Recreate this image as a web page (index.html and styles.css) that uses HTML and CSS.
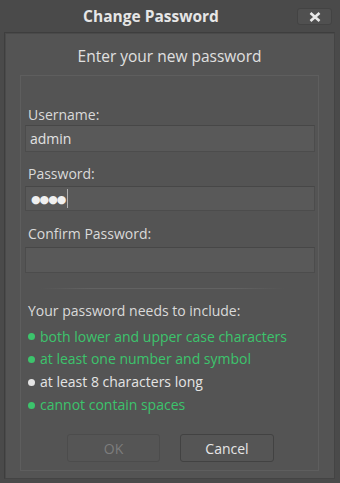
FILE: index.html
```html
<!DOCTYPE html>
<html>
<head>
<meta charset="utf-8">
<link rel="stylesheet" href="styles.css">
</head>
<body>
<div class="window">
  <div class="titlebar">
    <span class="title">Change Password</span>
    <button class="close" aria-label="Close">
      <svg width="12" height="10" viewBox="0 0 12 10"><path d="M1.5 1 L10.5 9 M10.5 1 L1.5 9" stroke="#e8e8e8" stroke-width="2.6" stroke-linecap="butt"/></svg>
    </button>
  </div>
  <div class="panel">
    <div class="heading">Enter your new password</div>
    <div class="group">
      <label class="label l-user">Username:</label>
      <div class="input i-user">admin</div>
      <label class="label l-pw">Password:</label>
      <div class="input i-pw"><span class="dots">●●●●</span><span class="caret"></span></div>
      <label class="label l-conf">Confirm Password:</label>
      <div class="input i-conf"></div>
      <div class="sep"></div>
      <div class="req-title">Your password needs to include:</div>
      <ul class="reqs">
        <li class="ok">both lower and upper case characters</li>
        <li class="ok">at least one number and symbol</li>
        <li class="bad">at least 8 characters long</li>
        <li class="ok">cannot contain spaces</li>
      </ul>
      <div class="buttons">
        <button class="btn disabled">OK</button>
        <button class="btn">Cancel</button>
      </div>
    </div>
  </div>
</div>
</body>
</html>
```
FILE: styles.css
```css
html, body {
  margin: 0;
  padding: 0;
  width: 340px;
  height: 483px;
  background: #4a4a4a;
  font-family: "Open Sans", "DejaVu Sans", sans-serif;
  color: #dcdcdc;
  overflow: hidden;
}
.window {
  display: flex;
  flex-direction: column;
  height: 483px;
}
.titlebar {
  height: 32px;
  position: relative;
  display: flex;
  align-items: center;
  justify-content: center;
}
.title {
  font-weight: bold;
  font-size: 15.5px;
  color: #e6e6e6;
  margin-left: -38px;
  margin-top: 0px;
}
.close {
  position: absolute;
  left: 297px;
  top: 8px;
  width: 35px;
  height: 17px;
  box-sizing: border-box;
  border: 1px solid #434343;
  border-radius: 3px;
  background: #505050;
  padding: 0;
  display: flex;
  align-items: center;
  justify-content: center;
}
.panel {
  margin: 0 5px 0 4px;
  height: 447px;
  box-sizing: border-box;
  border: 1px solid #3e3e3e;
  border-right-color: #444;
  border-bottom-color: #444;
  background: #545454;
  display: flex;
  flex-direction: column;
  box-shadow: inset 1px 1px 0 #4a4a4a;
}
.heading {
  height: 42px;
  display: flex;
  align-items: center;
  justify-content: center;
  font-size: 15.5px;
  color: #e0e0e0;
  padding-top: 4px;
  box-sizing: border-box;
}
.group {
  margin: 0 15px 0 15px;
  height: 396px;
  box-sizing: border-box;
  border: 1px solid #5e5e5e;
  padding: 0 3px 0 4px;
  display: flex;
  flex-direction: column;
}
.label {
  font-size: 14px;
  color: #dadada;
  padding-left: 3px;
  line-height: 18px;
}
.input {
  box-sizing: border-box;
  background: #595959;
  border: 1px solid #4c4c4c;
  border-top-color: #474747;
  font-size: 14px;
  color: #e2e2e2;
  padding-left: 4px;
  display: flex;
  align-items: center;
}
.l-user { margin-top: 30px; }
.i-user { margin-top: 1px; height: 27px; }
.l-pw { margin-top: 13px; }
.i-pw { margin-top: 3px; height: 25px; }
.l-conf { margin-top: 14px; }
.i-conf { margin-top: 4px; height: 26px; }
.dots {
  font-size: 11px;
  letter-spacing: -1px;
  color: #f0f0f0;
  padding-left: 1px;
}
.caret {
  display: inline-block;
  width: 1px;
  height: 19px;
  background: #b0b0b0;
  margin-left: 2px;
}
.sep {
  height: 1px;
  margin: 15px 30px 0 15px;
  background: linear-gradient(to right, rgba(100,100,100,0), #626262 20%, #626262 80%, rgba(100,100,100,0));
}
.req-title {
  margin-top: 12px;
  padding-left: 3px;
  font-size: 14px;
  color: #dadada;
  line-height: 20px;
}
.reqs {
  list-style: none;
  margin: 4.6px 0 0 0;
  padding: 0 0 0 3px;
  font-size: 14px;
  line-height: 22.7px;
}
.reqs li { display: flex; align-items: center; }
.reqs li::before {
  content: "";
  width: 7px;
  height: 7px;
  border-radius: 50%;
  margin-right: 5px;
  background: currentColor;
}
.reqs .ok { color: #3cc46c; }
.reqs .bad { color: #e4e4e4; }
.buttons {
  display: flex;
  justify-content: center;
  gap: 20px;
  margin-top: 17.6px;
  padding-left: 1px;
}
.btn {
  width: 94px;
  height: 28px;
  box-sizing: border-box;
  border: 1px solid #424242;
  border-radius: 3px;
  background: #555;
  font-family: "Open Sans", "DejaVu Sans", sans-serif;
  font-size: 14px;
  color: #e6e6e6;
  padding: 0;
}
.btn.disabled {
  color: #7d7d7d;
  border-color: #4c4c4c;
  width: 93px;
}
```
